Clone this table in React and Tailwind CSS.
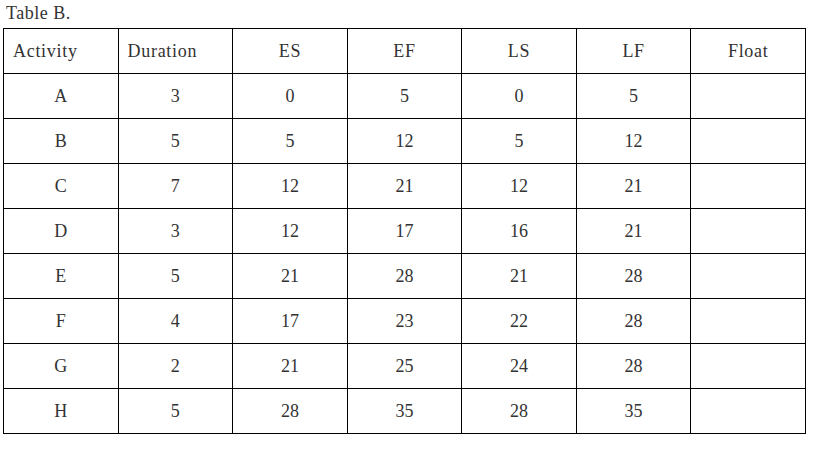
import React from 'react';

const rows = [
  ['A', 3, 0, 5, 0, 5],
  ['B', 5, 5, 12, 5, 12],
  ['C', 7, 12, 21, 12, 21],
  ['D', 3, 12, 17, 16, 21],
  ['E', 5, 21, 28, 21, 28],
  ['F', 4, 17, 23, 22, 28],
  ['G', 2, 21, 25, 24, 28],
  ['H', 5, 28, 35, 28, 35],
];

export default function App() {
  const cell = 'border border-black h-[45px] p-0 font-normal';
  const head = `${cell} tracking-[0.7px]`;
  return (
    <div className="bg-white min-h-[461px] w-[822px] text-[#333] text-[18px] font-['Liberation_Serif',serif]">
      <div className="pl-[6px] pt-[2px] h-[28px] leading-[22px] tracking-[0.5px]">Table B.</div>
      <table className="ml-[3px] w-[803px] table-fixed border-collapse">
        <thead>
          <tr>
            <th className={`${head} text-left pl-[9px]`}>Activity</th>
            <th className={`${head} text-left pl-[9px]`}>Duration</th>
            <th className={`${head} text-center`}>ES</th>
            <th className={`${head} text-center`}>EF</th>
            <th className={`${head} text-center`}>LS</th>
            <th className={`${head} text-center`}>LF</th>
            <th className={`${head} text-center`}>Float</th>
          </tr>
        </thead>
        <tbody>
          {rows.map((r) => (
            <tr key={r[0]}>
              {r.map((v, i) => (
                <td key={i} className={`${cell} text-center`}>{v}</td>
              ))}
              <td className={cell}></td>
            </tr>
          ))}
        </tbody>
      </table>
    </div>
  );
}
